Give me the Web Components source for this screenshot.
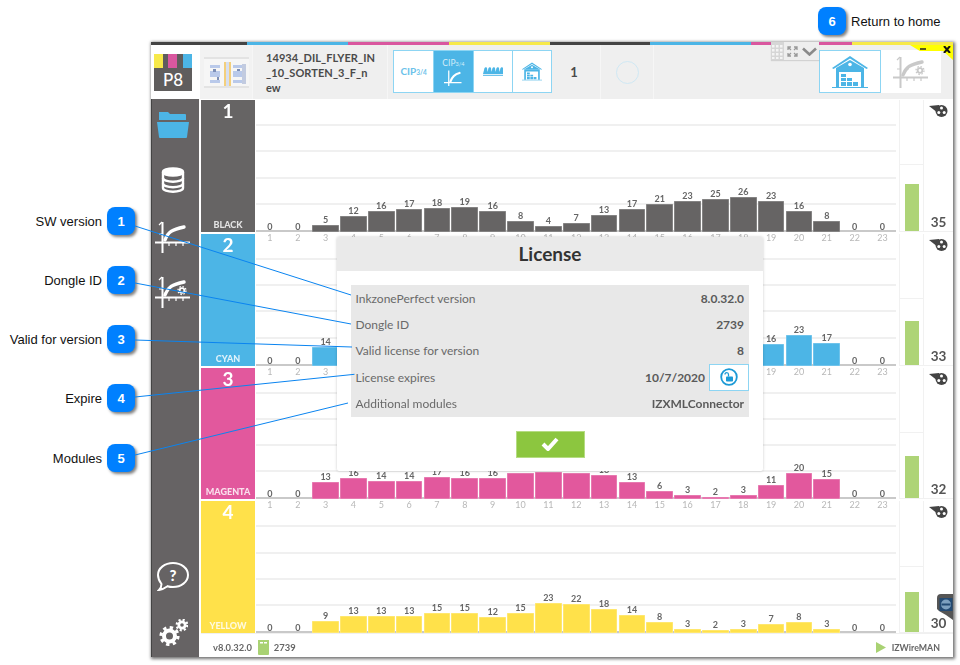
<!DOCTYPE html>
<html lang="en">
<head>
<meta charset="utf-8">
<title>License</title>
<style>
html,body{margin:0;padding:0;background:#fff}
</style>
</head>
<body>
<doc-page></doc-page>
<script>
const FONT = '"Lato","Noto Sans",sans-serif';
const ICONS = {
  folder:`<svg width="32" height="26" viewBox="0 0 32 26"><path fill="#4cb5e6" d="M2 0h9l2 2h15a1 1 0 0 1 1 1v5H2z"/><path fill="#4cb5e6" d="M0 10h32l-2 15a1 1 0 0 1-1 1H3a1 1 0 0 1-1-1z"/></svg>`,
  db:`<svg width="24" height="26" viewBox="0 0 24 26"><g fill="none" stroke="#fff" stroke-width="2.4"><ellipse cx="12" cy="5" rx="10" ry="3.6" fill="#fff"/><path d="M2 5v16c0 2.2 4.5 3.8 10 3.8s10-1.600 10-3.800V5"/><path d="M2 11c0 2.200 4.500 3.800 10 3.800s10-1.600 10-3.800M2 16.500c0 2.200 4.500 3.800 10 3.800s10-1.600 10-3.800"/></g></svg>`,
  curve:(c,g)=>`<svg width="36" height="32" viewBox="0 0 36 32"><g fill="none" stroke="${c}"><path stroke-width="2" d="M7.500 1v31M0 21.500h35"/><path stroke-width="1.200" d="M14 21.500v3.500M21 21.500v3.500M28 21.500v3.500M4 4l3-3M4 13h3"/><path stroke-width="3.400" stroke-linecap="round" d="M10 19C13 11 17 8.500 29 6"/>${g?`<circle cx="27" cy="14.500" r="2.300" stroke-width="1.800"/><circle cx="27" cy="14.500" r="4" stroke-width="1.300" stroke-dasharray="1.500 1.640"/>`:''}</g></svg>`,
  help:`<svg width="32" height="29" viewBox="0 0 32 29"><path fill="none" stroke="#fff" stroke-width="2" d="M16 1c8 0 15 5 15 12s-7 12-15 12c-2 0-4-.3-5.500-.8C8 26 5 27.500 2 28c1.500-1.500 2.500-3.500 2.500-6C2.500 19.500 1 16.500 1 13 1 6 8 1 16 1z"/><text x="16" y="19" text-anchor="middle" font-family="Lato,sans-serif" font-weight="900" font-size="15" fill="#fff">?</text></svg>`,
  gears:`<svg width="29" height="27" viewBox="0 0 29 27"><g fill="none" stroke="#fff"><circle cx="10.500" cy="17" r="5.500" stroke-width="4"/><circle cx="10.500" cy="17" r="8.500" stroke-width="3.200" stroke-dasharray="3.300 3.370"/><circle cx="23" cy="6" r="3.200" stroke-width="2.800"/><circle cx="23" cy="6" r="5.300" stroke-width="2.200" stroke-dasharray="2.100 2.060"/></g></svg>`,
  home:(w,h)=>`<svg width="${w}" height="${h}" viewBox="0 0 36 32"><path fill="#4cb5e6" d="M0 12 18 0l18 12-1.500 1L18 2.500 1.500 13z"/><path fill="#4cb5e6" d="M4 12 18 4l14 8v1H4z"/><circle cx="18" cy="8.500" r="1.800" fill="#fff"/><path fill="#4cb5e6" d="M4 13h28v18h-3V16H7v15H4z"/><path fill="#4cb5e6" d="M9 18h5v3H9zM9 22h5v3H9zM9 26h5v4H9zM15 22h5v3h-5zM15 26h5v4h-5zM21 26h5v4h-5z"/><path stroke="#4cb5e6" stroke-width="1" d="M0 31.500h36"/></svg>`,
  cones:`<svg width="20" height="9" viewBox="0 0 20 9"><path fill="#4cb5e6" d="M0 7 1.500 1 3 0l1 1 .8 6zM4 7l1.500-6L7 0l1 1 .8 6zM8 7l1.500-6L11 0l1 1 .8 6zM12 7l1.500-6L15 0l1 1 .8 6zM16 7l1.500-6L19 0l1 1v6z"/><path stroke="#4cb5e6" d="M0 8.300h20"/></svg>`,
  reel:`<svg width="19" height="12" viewBox="0 0 19 12"><path fill="#444" d="M0 1 10 0v1L9 8z"/><circle cx="12.500" cy="6" r="6" fill="#444"/><g fill="#fff"><circle cx="12.500" cy="2.900" r="1.500"/><circle cx="9.800" cy="7.500" r="1.500"/><circle cx="15.200" cy="7.500" r="1.500"/></g></svg>`,
  lock:`<svg width="18" height="18" viewBox="0 0 18 18"><circle cx="9" cy="9" r="7.800" fill="none" stroke="#1c9ad6" stroke-width="1.800"/><rect x="6" y="8.500" width="7" height="5" rx=".8" fill="#1c9ad6"/><path fill="none" stroke="#1c9ad6" stroke-width="1.300" d="M5 6.500C5 4 8.500 4 8.500 6.500v2"/></svg>`,
  check:`<svg width="18" height="14" viewBox="0 0 18 14"><path fill="none" stroke="#fff" stroke-width="4" d="M2 7l5 5L16 2"/></svg>`,
  usb:`<svg width="11" height="15" viewBox="0 0 11 15"><path fill="#a9d273" d="M0 0h11v4h0v10a1 1 0 0 1-1 1H1a1 1 0 0 1-1-1z"/><path fill="#fff" d="M2 2h3v1.500H2zM6 2h3v1.500H6z"/></svg>`,
  play:`<svg width="10" height="11" viewBox="0 0 10 11"><path fill="#a9d273" d="M0 0l10 5.500L0 11z"/></svg>`,
  thumb:`<svg width="45" height="31" viewBox="0 0 45 31"><rect width="45" height="31" fill="#f6f6f6"/><g fill="#e3e3e3"><rect x="0" y="0" width="45" height="2"/><rect x="0" y="29" width="45" height="2"/></g><g fill="#b9c9ea"><rect x="6" y="8" width="10" height="3"/><rect x="6" y="14" width="10" height="6"/><rect x="6" y="23" width="10" height="3"/><rect x="29" y="8" width="9" height="3"/><rect x="29" y="14" width="9" height="6"/><rect x="29" y="23" width="9" height="3"/></g><g fill="#7d8fb8"><rect x="9" y="12" width="3" height="3"/><rect x="13" y="20" width="2" height="3"/><rect x="33" y="12" width="3" height="2"/></g><rect x="20" y="5" width="2" height="24" fill="#f3cf7c"/><rect x="25" y="5" width="2" height="24" fill="#f3cf7c"/><rect x="38" y="7" width="4" height="20" fill="#c2cbe0"/><rect x="22" y="5" width="3" height="24" fill="#d7dff0"/></svg>`,
  grid:`<svg width="11" height="14" viewBox="0 0 11 14"><g fill="#f4f4f4"><rect x="0" y="0" width="2.500" height="2.500"/><rect x="4" y="0" width="2.500" height="2.500"/><rect x="8" y="0" width="2.500" height="2.500"/><rect x="0" y="4" width="2.500" height="2.500"/><rect x="4" y="4" width="2.500" height="2.500"/><rect x="8" y="4" width="2.500" height="2.500"/><rect x="0" y="8" width="2.500" height="2.500"/><rect x="4" y="8" width="2.500" height="2.500"/><rect x="8" y="8" width="2.500" height="2.500"/><rect x="0" y="12" width="2.500" height="2"/><rect x="4" y="12" width="2.500" height="2"/><rect x="8" y="12" width="2.500" height="2"/></g></svg>`,
  expand:`<svg width="11" height="11" viewBox="0 0 11 11"><path fill="none" stroke="#999" stroke-width="1.300" d="M1 4V1h3M7 1h3v3M10 7v3H7M4 10H1V7M1 1l3 3M10 1 7 4M10 10 7 7M1 10l3-3"/></svg>`,
  chev:`<svg width="15" height="9" viewBox="0 0 15 9"><path fill="none" stroke="#8a8a8a" stroke-width="2.600" d="M1 1.500l6.500 6 6.500-6"/></svg>`
};

function shadow(el, html){ el.attachShadow({mode:'open'}).innerHTML = html; }

class CalloutBadge extends HTMLElement{
  constructor(){super();shadow(this,`<style>
  :host{display:flex;align-items:center;gap:5px;height:28px;font:13px "Liberation Sans",Arial,sans-serif;color:#111}
  b{width:28px;height:28px;border-radius:8px;background:#0080ff;color:#fff;display:flex;align-items:center;justify-content:center;font:bold 13px "Liberation Sans",Arial,sans-serif;box-shadow:2px 2px 3px rgba(0,0,0,.5);flex:none}
  :host([reverse]){flex-direction:row-reverse;justify-content:flex-end}
  </style><span><slot></slot></span><b>${this.getAttribute('n')||''}</b>`);}
}
customElements.define('callout-badge',CalloutBadge);

class InkRow extends HTMLElement{
  constructor(){super();}
  connectedCallback(){
    const a=n=>this.getAttribute(n);
    const vals=a('values').split(' ');
    const hideTicks=(a('hideticks')||'').split('-').map(Number);
    const noAxis=this.hasAttribute('noaxis');
    const cols=vals.map((v,i)=>{
      const n=i+1;
      const hiddenLabel=v.endsWith('!')||v==='-';
      const num=v==='-'?0:parseInt(v);
      const h=(num*1.32).toFixed(1);
      const tick=noAxis||(hideTicks.length===2&&n>=hideTicks[0]&&n<=hideTicks[1])?'<span class="tick"></span>':`<span class="tick">${n}</span>`;
      return `<div class="col">${hiddenLabel?'':`<span class="val">${num}</span>`}${num?`<i class="bar" style="height:${h}px"></i>`:''}${tick}</div>`;
    }).join('');
    shadow(this,`<style>
    :host{display:grid;grid-template-columns:54px 641px 28px 29px;column-gap:0;font-family:${FONT};min-height:0}
    .band{background:${a('color')};display:flex;flex-direction:column;align-items:center;justify-content:space-between;color:#fff;padding:0 0 1px;box-sizing:border-box}
    .band b{font-size:19px;line-height:22px;font-weight:700}
    .band span{font-size:9px;line-height:13px;font-weight:900;color:rgba(255,255,255,.82)}
    .plot{display:grid;min-height:0}
    .lines,.bars{grid-area:1/1}
    .lines{display:grid;grid-template-rows:repeat(4,26.200px) 1fr;margin-left:1px}
    .lines div{border-bottom:2px solid #f0f0f0}
    .lines div:last-child{border-bottom:2px solid #c9c9c9}
    .bars{display:grid;grid-template-columns:repeat(23,27.850px);margin-left:1px;min-height:0}
    .col{display:flex;flex-direction:column;justify-content:flex-end;align-items:center;min-height:0}
    .val{font-size:9px;line-height:10px;font-weight:700;color:#666}
    .bar{display:block;width:26.700px;background:${a('color')};box-shadow:0 0 0 .5px rgba(255,255,255,.4) inset}
    .tick{display:block;height:11px;margin-bottom:-11px;font-size:9px;line-height:11px;color:#b8b8b8}
    .level{margin-left:3px;display:grid;grid-template-rows:1fr 1fr;border:1px solid #f1f1f1;border-width:0 1px 1px 1px}
    .level div:first-child{border-bottom:1px solid #f1f1f1}
    .level div:last-child{display:flex;align-items:flex-end;justify-content:center}
    .level i{display:block;width:14px;background:#aed477;height:${a('level')}px}
    .num{display:flex;flex-direction:column;align-items:center;justify-content:space-between;padding:5px 0 0 0;box-sizing:border-box;font-size:13.500px;line-height:18px;color:#555;font-weight:700;border-bottom:1px solid #f1f1f1}
    .num svg{display:block;align-self:flex-start;margin-left:5px}
    </style>
    <div class="band"><b>${a('n')}</b><span>${a('name')}</span></div>
    <div class="plot"><div class="lines"><div></div><div></div><div></div><div></div><div></div></div><div class="bars">${cols}</div></div>
    <div class="level"><div></div><div><i></i></div></div>
    <div class="num">${ICONS.reel}<span>${a('num')}</span></div>`);
  }
}
customElements.define('ink-row',InkRow);

class AppHeader extends HTMLElement{
  constructor(){super();shadow(this,`<style>
  :host{display:flex;height:54px;background:#efefef;font-family:${FONT};position:relative}
  .logo{width:49px;background:#fff;display:flex;align-items:center;padding-left:3px;box-sizing:border-box}
  .mark{width:38px;height:37px;background:#5f5d5d;position:relative;display:flex;flex-direction:column}
  .top{display:grid;grid-template-columns:9px 5px 9px 6px 9px;height:14px;background:#efefef}
  .mark b{color:#fff;font:500 17px/23px ${FONT};text-align:center}
  .thumb{width:53px;background:#f2f2f2;display:flex;align-items:center;justify-content:center;border-right:1px solid #f6f6f6;box-sizing:border-box}
  .name{width:135px;box-sizing:border-box;padding:5px 0 0 13px;font:700 11px/15px ${FONT};letter-spacing:.07px;color:#4a4a4a;border-right:1px solid #f6f6f6}
  .group{display:grid;grid-template-columns:repeat(4,1fr);width:159px;height:43px;margin:5px 0 0 5px;background:#fff;border:1px solid #8dd5f3;box-sizing:border-box;flex:none}
  .group>div{display:flex;align-items:center;justify-content:center;flex-direction:column;border-left:1px solid #8dd5f3;color:#6cc2ea;font-weight:700;font-size:10px;line-height:11px}
  .group>div:first-child{border-left:0}
  .group .on{background:#4cb5e6;color:#d4edf9;font-size:8.500px;font-weight:400}
  .group small{font-size:6.500px}
  .group .on small{font-size:5.500px}
  .count{width:49px;text-align:center;font:700 13px/54px ${FONT};color:#4a4a4a;padding-right:4px;box-sizing:border-box;border-right:1px solid #f6f6f6}
  .circ{width:53px;display:flex;align-items:center;justify-content:center;border-right:1px solid #f6f6f6;box-sizing:border-box}
  .circ i{width:21px;height:21px;border-radius:50%;border:1.500px solid #cfe8f4;display:block}
  .spacer{flex:1}
  .right{display:flex;height:43px;margin:5px 12px 0 0}
  .right div{display:flex;align-items:center;justify-content:center;background:#fff}
  .r1{width:62px;border:1px solid #8dd5f3;box-sizing:border-box}
  .r2{width:60px}
  svg{display:block}
  </style>
  <div class="logo"><div class="mark"><div class="top"><span style="background:#f7e94a"></span><span style="background:#5f5d5d"></span><span style="background:#d9579f"></span><span style="background:#5f5d5d"></span><span style="background:#4cb5e6"></span></div><b>P8</b></div></div>
  <div class="thumb">${ICONS.thumb}</div>
  <div class="name">14934_DIL_FLYER_IN<br>_10_SORTEN_3_F_n<br>ew</div>
  <div class="group">
    <div><span>CIP<small>3/4</small></span></div>
    <div class="on"><span>CIP<small>3/4</small></span><svg width="20" height="16" viewBox="0 0 36 32"><g fill="none" stroke="#fff"><path stroke-width="2.500" d="M9.500 1v31M0 25h35"/><path stroke-width="4.500" stroke-linecap="round" d="M13 23C16 14 20 9 31 6"/></g></svg></div>
    <div>${ICONS.cones}</div>
    <div>${ICONS.home(20,19)}</div>
  </div>
  <div class="count">1</div>
  <div class="circ"><i></i></div>
  <div class="spacer"></div>
  <div class="right"><div class="r1">${ICONS.home(36,32)}</div><div class="r2">${ICONS.curve('#c9c9c9',true)}</div></div>`);}
}
customElements.define('app-header',AppHeader);

class AppSidebar extends HTMLElement{
  constructor(){super();shadow(this,`<style>
  :host{display:flex;flex-direction:column;align-items:center;background:#666364;padding:13px 4px 11px 0;box-sizing:border-box;box-shadow:inset 1px 0 0 #444}
  .a{height:26px}.b{margin-top:29px;height:26px}.c{margin-top:28px;height:32px}.d{margin-top:23px;height:32px}
  .e{margin-top:auto;height:29px}.f{margin-top:28px;height:27px}
  div{display:flex}
  </style>
  <div class="a">${ICONS.folder}</div><div class="b">${ICONS.db}</div><div class="c">${ICONS.curve('#fff',false)}</div><div class="d">${ICONS.curve('#fff',true)}</div><div class="e">${ICONS.help}</div><div class="f">${ICONS.gears}</div>`);}
}
customElements.define('app-sidebar',AppSidebar);

class LicenseDialog extends HTMLElement{
  constructor(){super();shadow(this,`<style>
  :host{display:flex;flex-direction:column;position:absolute;left:186px;top:195px;width:426px;height:234px;background:#fff;box-shadow:0 0 3px rgba(0,0,0,.22);border-radius:2px;font-family:${FONT};box-sizing:border-box;overflow:hidden}
  h1{margin:0;height:34px;background:#eaeaea;text-align:center;font:700 19px/34px ${FONT};color:#333}
  .tbl{margin:14px 14px 0 13.500px;background:#e8e8e8;display:grid;grid-auto-rows:26.400px}
  .r{display:flex;align-items:center;justify-content:space-between;padding:0 5px 0 5px;font-size:12px;color:#6a6a6a}
  .r b{font-weight:700;color:#5a5a5a}
  .r.btn{padding-right:0}
  .v{display:flex;align-items:center;gap:4px}
  .lockb{width:40px;height:27px;background:#fff;border:1px solid #8dd5f3;box-sizing:border-box;display:flex;align-items:center;justify-content:center}
  .ok{align-self:center;margin-top:14px;width:69px;height:27px;background:#8cc63f;border:1px solid #b5dc82;box-sizing:border-box;display:flex;align-items:center;justify-content:center}
  </style>
  <h1>License</h1>
  <div class="tbl">
   <div class="r"><span>InkzonePerfect version</span><b>8.0.32.0</b></div>
   <div class="r"><span>Dongle ID</span><b>2739</b></div>
   <div class="r"><span>Valid license for version</span><b>8</b></div>
   <div class="r btn"><span>License expires</span><div class="v"><b>10/7/2020</b><div class="lockb">${ICONS.lock}</div></div></div>
   <div class="r"><span>Additional modules</span><b>IZXMLConnector</b></div>
  </div>
  <div class="ok">${ICONS.check}</div>`);}
}
customElements.define('license-dialog',LicenseDialog);

class AppWindow extends HTMLElement{
  constructor(){super();shadow(this,`<style>
  :host{display:grid;grid-template-rows:3px 54px 1fr;width:802px;height:615px;background:#fff;box-shadow:1px 1px 3px 1px rgba(0,0,0,.55);position:relative;font-family:${FONT}}
  .strip{display:grid;grid-template-columns:96px repeat(7,1fr)}
  .body{display:grid;grid-template-columns:48px 1fr;min-height:0}
  main{display:grid;grid-template-rows:1fr 24px;min-height:0;padding-top:1px;padding-left:2px}
  .rows{display:grid;grid-template-rows:repeat(4,1fr);row-gap:2px;min-height:0}
  footer{display:flex;align-items:center;padding:4px 13px 0 12px;font-size:9.400px;font-weight:700;color:#666;box-sizing:border-box;border-top:1px solid #f0f0f0}
  footer span{line-height:12px}
  .usb{margin:0 5px 0 6px;display:flex}
  .sp{flex:1}
  .play{display:flex;margin-right:6px}
  .iz{font-size:8.800px}
  .tools{position:absolute;left:620px;top:0;display:flex;height:18px;background:#eee;box-shadow:0 1px 1px rgba(0,0,0,.12)}
  .tools .g{width:13px;background:#d6d6d6;display:flex;justify-content:center;padding-top:3px;box-sizing:border-box}
  .tools .x{width:35px;display:flex;align-items:center;gap:4px;padding-left:3px;box-sizing:border-box}
  .corner{position:absolute;right:0;top:3px;width:43px;height:15px;background:#ffff00;clip-path:polygon(0 0,100% 0,100% 100%,77% 40%,23% 40%)}
  .wc{position:absolute;right:2px;top:4px;display:flex;gap:17px}
  svg{display:block}
  </style>
  <div class="strip">
    <i style="background:#444"></i><i style="background:#4cb5e6"></i><i style="background:#d9579f"></i><i style="background:#f7e94a"></i><i style="background:#444"></i><i style="background:#4cb5e6"></i><i style="background:#d9579f"></i><i style="background:#f7e94a"></i>
  </div>
  <app-header></app-header>
  <div class="body">
    <app-sidebar></app-sidebar>
    <main>
      <div class="rows"><slot></slot></div>
      <footer><span>v8.0.32.0</span><div class="usb">${ICONS.usb}</div><span>2739</span><div class="sp"></div><div class="play">${ICONS.play}</div><span class="iz">IZWireMAN</span></footer>
    </main>
  </div>
  <div class="tools"><div class="g">${ICONS.grid}</div><div class="x">${ICONS.expand}${ICONS.chev}</div></div>
  <div class="corner"></div>
  <div class="wc"><svg width="6" height="6" viewBox="0 0 6 6"><path stroke="#222" stroke-width="1.500" d="M0 3h6"/></svg><svg width="8" height="7" viewBox="0 0 8 7"><path stroke="#111" stroke-width="2" d="M1 0l6 7M7 0 1 7"/></svg></div>
  <svg style="position:absolute;left:786px;top:552px" width="16" height="26" viewBox="0 0 16 26"><path fill="#555" d="M4 0h12v26l-7-5-7-4-2-2V4a4 4 0 0 1 4-4z"/><rect x="2.500" y="4" width="13" height="13" fill="#234a73"/><circle cx="9" cy="10.500" r="5" fill="#7da0bf"/><path stroke="#234a73" stroke-width="2" d="M4.500 10.500h9"/></svg>
  <license-dialog></license-dialog>`);}
}
customElements.define('app-window',AppWindow);

class DocPage extends HTMLElement{
  constructor(){super();shadow(this,`<style>
  :host{display:grid;grid-template-columns:151px 802px 7px;grid-template-rows:42px 615px 8px;width:960px;height:665px;position:relative;overflow:hidden;background:#fff}
  .top{grid-column:2/4;grid-row:1;padding:7px 0 0 667px;box-sizing:border-box}
  .left{grid-column:1;grid-row:2;display:flex;flex-direction:column;align-items:flex-end;padding:165px 16px 0 0;box-sizing:border-box;gap:31px}
  .left .last{margin-top:1px}
  app-window{grid-column:2;grid-row:2;filter:blur(.35px)}
  svg.leaders{position:absolute;left:0;top:0;pointer-events:none}
  </style>
  <div class="top"><callout-badge n="6" reverse>Return to home</callout-badge></div>
  <div class="left">
    <callout-badge n="1">SW version</callout-badge>
    <callout-badge n="2">Dongle ID</callout-badge>
    <callout-badge n="3">Valid for version</callout-badge>
    <callout-badge n="4">Expire</callout-badge>
    <callout-badge n="5" class="last">Modules</callout-badge>
  </div>
  <app-window>
    <ink-row n="1" name="BLACK" color="#666464" level="47" num="35" values="0 0 5 12 16 17 18 19 16 8 4 7 13 17 21 23 25 26 23 16 8 0 0"></ink-row>
    <ink-row n="2" name="CYAN" color="#4cb5e6" level="44" num="33" hideticks="4-18" values="0 0 14 - - - - - - - - - - - - - - - 16 23 17 0 0"></ink-row>
    <ink-row n="3" name="MAGENTA" color="#e2589d" level="42" num="32" values="0 0 13 16 14 14 17 16 16 20! 21! 20! 18 13 6 3 2 3 11 20 15 0 0"></ink-row>
    <ink-row n="4" name="YELLOW" color="#ffe14a" level="40" num="30" noaxis values="0 0 9 13 13 13 15 15 12 15 23 22 18 14 8 3 2 3 7 8 3 0 0"></ink-row>
  </app-window>
  <svg class="leaders" width="960" height="665" viewBox="0 0 960 665"><g stroke="#0a84f0" stroke-width="1" fill="none">
    <path d="M135 226 351 295"/><path d="M135 283 351 324"/><path d="M135 340 352 347"/><path d="M135 397 354.500 374.300"/><path d="M135 455 348 403"/>
  </g></svg>`);}
}
customElements.define('doc-page',DocPage);
</script>
</body>
</html>
